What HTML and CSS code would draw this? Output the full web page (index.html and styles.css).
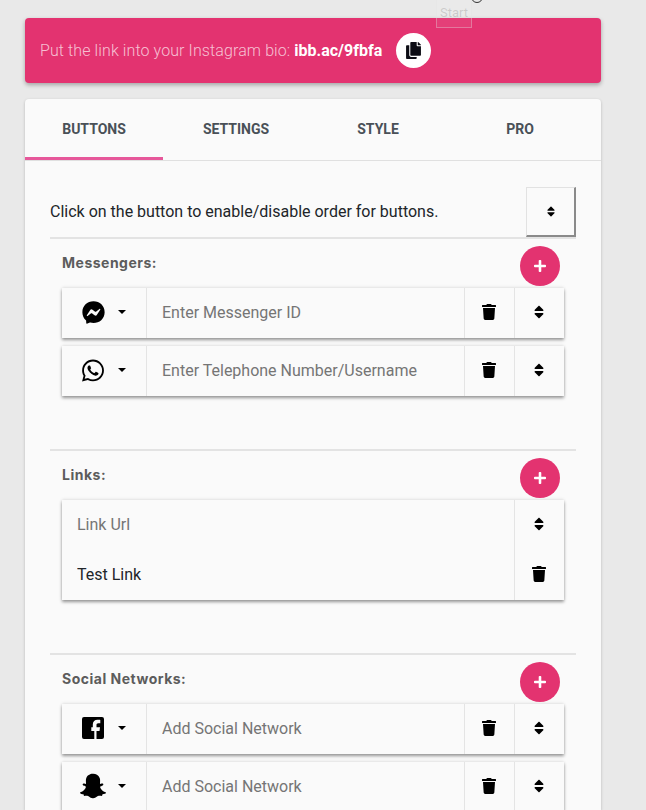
FILE: index.html
```html
<!DOCTYPE html>
<html lang="en">
<head>
  <meta charset="UTF-8" />
  <meta name="viewport" content="width=device-width, initial-scale=1.0" />
  <title>Buttons</title>
  <link rel="stylesheet" href="styles.css">
</head>
<body>

  <svg width="0" height="0" class="sprites">
    <symbol id="i-sort" viewBox="0 0 320 512"><path d="M41 288h238c21.4 0 32.1 25.9 17 41L177 448c-9.4 9.4-24.6 9.4-33.9 0L24 329c-15.1-15.1-4.4-41 17-41zm255-105L177 64c-9.4-9.4-24.6-9.4-33.9 0L24 183c-15.1 15.1-4.4 41 17 41h238c21.4 0 32.1-25.9 17-41z"/></symbol>
    <symbol id="i-trash" viewBox="0 0 448 512"><path d="M432 32H312l-9.4-18.7A24 24 0 0 0 281.1 0H166.8a23.72 23.72 0 0 0-21.4 13.3L136 32H16A16 16 0 0 0 0 48v32a16 16 0 0 0 16 16h416a16 16 0 0 0 16-16V48a16 16 0 0 0-16-16zM53.2 467a48 48 0 0 0 47.9 45h245.8a48 48 0 0 0 47.9-45L416 128H32z"/></symbol>
    <symbol id="i-plus" viewBox="0 0 448 512"><path d="M416 208H272V64c0-17.67-14.33-32-32-32h-32c-17.67 0-32 14.33-32 32v144H32c-17.67 0-32 14.33-32 32v32c0 17.67 14.33 32 32 32h144v144c0 17.67 14.33 32 32 32h32c17.67 0 32-14.33 32-32V304h144c17.67 0 32-14.33 32-32v-32c0-17.67-14.33-32-32-32z"/></symbol>
    <symbol id="i-messenger" viewBox="0 0 512 512"><path d="M256.55 8C116.52 8 8 110.34 8 248.57c0 72.3 29.71 134.78 78.07 177.94 8.35 7.51 6.63 11.86 8.05 58.23A19.92 19.92 0 0 0 122 502.31c52.91-23.3 53.59-25.14 62.56-22.7C337.85 521.8 504 423.7 504 248.57 504 110.34 396.59 8 256.55 8zm149.24 185.13l-73 115.57a37.37 37.37 0 0 1-53.91 9.93l-58.08-43.47a15 15 0 0 0-18 0l-78.37 59.44c-10.46 7.93-24.16-4.6-17.11-15.67l73-115.57a37.36 37.36 0 0 1 53.91-9.93l58.06 43.46a15 15 0 0 0 18 0l78.41-59.38c10.44-7.98 24.14 4.54 17.09 15.62z"/></symbol>
    <symbol id="i-whatsapp" viewBox="0 0 448 512"><path d="M380.9 97.1C339 55.1 283.2 32 223.9 32c-122.4 0-222 99.6-222 222 0 39.1 10.2 77.3 29.6 111L0 480l117.7-30.9c32.4 17.7 68.9 27 106.1 27h.1c122.3 0 224.1-99.6 224.1-222 0-59.3-25.2-115-67.1-157zm-157 341.6c-33.2 0-65.7-8.9-94-25.7l-6.7-4-69.8 18.3L72 359.2l-4.4-7c-18.5-29.4-28.2-63.3-28.2-98.2 0-101.7 82.8-184.5 184.6-184.5 49.3 0 95.6 19.2 130.4 54.1 34.8 34.9 56.2 81.2 56.1 130.5 0 101.8-84.9 184.6-186.6 184.6zm101.2-138.2c-5.5-2.8-32.8-16.2-37.9-18-5.1-1.9-8.8-2.8-12.5 2.8-3.7 5.6-14.3 18-17.6 21.8-3.2 3.7-6.5 4.2-12 1.4-32.6-16.3-54-29.1-75.5-66-5.7-9.8 5.7-9.1 16.3-30.3 1.8-3.7.9-6.9-.5-9.7-1.4-2.8-12.5-30.1-17.1-41.2-4.5-10.8-9.1-9.3-12.5-9.5-3.2-.2-6.9-.2-10.6-.2-3.7 0-9.7 1.4-14.8 6.9-5.1 5.6-19.4 19-19.4 46.3 0 27.3 19.9 53.7 22.6 57.4 2.8 3.7 39.1 59.7 94.8 83.8 35.2 15.2 49 16.5 66.6 13.9 10.7-1.6 32.8-13.4 37.4-26.4 4.6-13 4.6-24.1 3.2-26.4-1.3-2.5-5-3.9-10.5-6.6z"/></symbol>
    <symbol id="i-facebook" viewBox="0 0 22 22"><path d="M2 0h18a2 2 0 0 1 2 2v18a2 2 0 0 1-2 2h-5.5v-8h3l.5-3.7h-3.5V8c0-1.1.4-1.8 1.9-1.8h1.9V2.9c-.4 0-1.5-.1-2.8-.1-2.8 0-4.7 1.7-4.7 4.8v2.7H9.3V14h3v8H2a2 2 0 0 1-2-2V2a2 2 0 0 1 2-2z"/></symbol>
    <symbol id="i-snapchat" viewBox="0 0 512 512"><path d="M510.846 392.673c-5.211 12.157-27.239 21.089-67.36 27.318-2.064 2.786-3.775 14.686-6.507 23.956-1.625 5.566-5.623 8.869-12.128 8.869l-.297-.005c-9.395 0-19.203-4.323-38.852-4.323-26.521 0-35.662 6.043-56.254 20.588-21.832 15.438-42.771 28.764-74.027 27.399-31.646 2.334-58.025-16.908-72.871-27.404-20.714-14.643-29.828-20.582-56.241-20.582-18.864 0-30.736 4.72-38.852 4.72-8.073 0-11.213-4.922-12.422-9.04-2.703-9.189-4.404-21.263-6.523-24.13-20.679-3.209-67.31-11.344-68.498-32.15a10.627 10.627 0 0 1 8.877-11.069c69.583-11.455 100.924-82.901 102.227-85.934.074-.176.155-.344.237-.515 3.713-7.537 4.544-13.849 2.463-18.753-5.05-11.896-26.872-16.164-36.053-19.796-23.715-9.366-27.015-20.128-25.612-27.504 2.437-12.836 21.725-20.735 33.002-15.453 8.919 4.181 16.843 6.297 23.547 6.297 5.022 0 8.212-1.204 9.96-2.171-2.043-35.936-7.101-87.29 5.687-115.969C158.122 21.304 229.705 15.42 250.826 15.42c.944 0 9.141-.089 10.11-.089 52.148 0 102.254 26.78 126.723 81.643 12.777 28.65 7.749 79.792 5.695 116.009 1.582.872 4.357 1.942 8.599 2.139 6.397-.286 13.815-2.389 22.069-6.257 6.085-2.846 14.406-2.461 20.48.058l.029.01c9.476 3.385 15.439 10.215 15.589 17.87.184 9.747-8.522 18.165-25.878 25.018-2.118.835-4.694 1.655-7.434 2.525-9.797 3.106-24.6 7.805-28.616 17.271-2.079 4.904-1.256 11.211 2.46 18.748.087.168.166.342.239.515 1.301 3.03 32.615 74.46 102.23 85.934 6.427 1.058 11.163 7.877 7.725 15.859z"/></symbol>
  </svg>

  <div class="ghost-start">Start</div>
  <div class="ghost-cursor"></div>

  <div class="banner">
    <p class="banner-text">Put the link into your Instagram bio: <b>ibb.ac/9fbfa</b></p>
    <button class="copy-btn">
      <svg viewBox="0 0 448 512" class="copy-icon"><path d="M320 448v40c0 13.255-10.745 24-24 24H24c-13.255 0-24-10.745-24-24V120c0-13.255 10.745-24 24-24h72v296c0 30.879 25.121 56 56 56h168zm0-344V0H152c-13.255 0-24 10.745-24 24v368c0 13.255 10.745 24 24 24h272c13.255 0 24-10.745 24-24V128H344c-13.2 0-24-10.8-24-24zm120.971-31.029L375.029 7.029A24 24 0 0 0 358.059 0H352v96h96v-6.059a24 24 0 0 0-7.029-16.97z"/></svg>
    </button>
  </div>

  <div class="card">
    <div class="tabs">
      <div class="tab active">BUTTONS</div>
      <div class="tab">SETTINGS</div>
      <div class="tab">STYLE</div>
      <div class="tab">PRO</div>
    </div>

    <div class="content">
      <div class="order-row">
        <span class="order-text">Click on the button to enable/disable order for buttons.</span>
        <button class="order-btn"><svg class="ic-sort-sm"><use href="#i-sort"/></svg></button>
      </div>

      <section class="group messengers">
        <div class="group-head">
          <h3>Messengers:</h3>
          <button class="add-btn"><svg class="ic-plus"><use href="#i-plus"/></svg></button>
        </div>
        <div class="row">
          <div class="cell-select"><svg class="ic-net"><use href="#i-messenger"/></svg><i class="caret"></i></div>
          <input class="field" placeholder="Enter Messenger ID">
          <div class="cell-btn"><svg class="ic-trash"><use href="#i-trash"/></svg></div>
          <div class="cell-btn"><svg class="ic-sort"><use href="#i-sort"/></svg></div>
        </div>
        <div class="row">
          <div class="cell-select"><svg class="ic-net ic-tall"><use href="#i-whatsapp"/></svg><i class="caret"></i></div>
          <input class="field" placeholder="Enter Telephone Number/Username">
          <div class="cell-btn"><svg class="ic-trash"><use href="#i-trash"/></svg></div>
          <div class="cell-btn"><svg class="ic-sort"><use href="#i-sort"/></svg></div>
        </div>
      </section>

      <section class="group links">
        <div class="group-head">
          <h3>Links:</h3>
          <button class="add-btn"><svg class="ic-plus"><use href="#i-plus"/></svg></button>
        </div>
        <div class="row row-link">
          <div class="link-fields">
            <input class="field" placeholder="Link Url">
            <input class="field" value="Test Link">
          </div>
          <div class="link-actions">
            <div class="cell-btn"><svg class="ic-sort"><use href="#i-sort"/></svg></div>
            <div class="cell-btn"><svg class="ic-trash"><use href="#i-trash"/></svg></div>
          </div>
        </div>
      </section>

      <section class="group">
        <div class="group-head">
          <h3>Social Networks:</h3>
          <button class="add-btn"><svg class="ic-plus"><use href="#i-plus"/></svg></button>
        </div>
        <div class="row">
          <div class="cell-select"><svg class="ic-net ic-fb"><use href="#i-facebook"/></svg><i class="caret"></i></div>
          <input class="field" placeholder="Add Social Network">
          <div class="cell-btn"><svg class="ic-trash"><use href="#i-trash"/></svg></div>
          <div class="cell-btn"><svg class="ic-sort"><use href="#i-sort"/></svg></div>
        </div>
        <div class="row">
          <div class="cell-select"><svg class="ic-net ic-wide"><use href="#i-snapchat"/></svg><i class="caret"></i></div>
          <input class="field" placeholder="Add Social Network">
          <div class="cell-btn"><svg class="ic-trash"><use href="#i-trash"/></svg></div>
          <div class="cell-btn"><svg class="ic-sort"><use href="#i-sort"/></svg></div>
        </div>
      </section>
    </div>
  </div>

</body>
</html>
```

FILE: styles.css
```css
html, body {
  height: 810px;
  overflow: hidden;
}

body {
  font-family: Roboto, Arial, sans-serif;
  margin: 0;
  padding: 18px 45px 0 25px;
  box-sizing: border-box;
  background-color: #e9e9e9;
  position: relative;
}

.sprites {
  position: absolute;
}

svg {
  fill: #000;
  display: block;
}

button {
  border: none;
  padding: 0;
  cursor: pointer;
}

.ghost-start {
  position: absolute;
  top: 0;
  left: 436px;
  width: 36px;
  height: 28px;
  box-sizing: border-box;
  padding-top: 5px;
  border: 1px solid rgba(225, 225, 225, 0.35);
  border-top: none;
  background-color: rgba(255, 255, 255, 0.06);
  color: rgba(120, 120, 120, 0.28);
  font-size: 13px;
  text-align: center;
  z-index: 5;
}

.ghost-cursor {
  position: absolute;
  top: -9px;
  left: 471px;
  width: 10px;
  height: 10px;
  border: 1px solid #333;
  border-radius: 50%;
}

.banner {
  height: 65px;
  display: flex;
  align-items: center;
  padding: 0 15px;
  background-color: #e33370;
  border-radius: 4px;
  box-shadow: 0 2px 4px rgba(0, 0, 0, 0.3);
}

.banner-text {
  margin: 0;
  font-size: 16px;
  font-weight: 300;
  letter-spacing: 0.1px;
  color: rgba(255, 255, 255, 0.7);
}

.banner-text b {
  font-weight: 700;
  letter-spacing: 0;
  color: white;
}

.copy-btn {
  width: 35px;
  height: 35px;
  margin-left: 14px;
  border-radius: 50%;
  background-color: white;
  display: flex;
  align-items: center;
  justify-content: center;
}

.copy-icon {
  width: 15px;
  height: 17px;
  fill: #0c0c14;
}

.card {
  margin-top: 16px;
  height: 711px;
  overflow: hidden;
  background-color: #fafafa;
  border-radius: 4px 4px 0 0;
  box-shadow: 0 1px 3px rgba(0, 0, 0, 0.22);
}

.tabs {
  display: flex;
  gap: 4px;
  height: 61px;
  border-bottom: 1px solid #e0e0e0;
}

.tab {
  width: 138px;
  height: 61px;
  box-sizing: border-box;
  padding-top: 22px;
  text-align: center;
  font-size: 14px;
  font-weight: 700;
  line-height: 17px;
  color: #495057;
}

.tab.active {
  border-bottom: 3px solid #e6579a;
}

.content {
  padding: 26px 25px 0;
}

.order-row {
  display: flex;
  justify-content: space-between;
  align-items: center;
  font-size: 16px;
  color: #212529;
}

.order-text {
  padding-bottom: 2px;
}

.order-btn {
  width: 50px;
  height: 50px;
  display: flex;
  align-items: center;
  justify-content: center;
  background-color: #fafafa;
  border-top: 1px solid #e2e2e2;
  border-left: 1px solid #e2e2e2;
  border-right: 2px solid #8a8a8a;
  border-bottom: 2px solid #8a8a8a;
}

.ic-sort-sm {
  width: 8px;
  height: 13px;
}

.group {
  border-top: 2px solid #e3e3e3;
  padding: 7px 12px 0;
}

.messengers {
  height: 212px;
  box-sizing: border-box;
}

.links {
  height: 204px;
  box-sizing: border-box;
}

.group-head {
  display: flex;
  justify-content: space-between;
  height: 40px;
  margin-bottom: 2px;
  padding-right: 4px;
}

.group-head h3 {
  margin: 8px 0 0;
  font-family: Inter, Arial, sans-serif;
  font-size: 14px;
  font-weight: 700;
  letter-spacing: 0.5px;
  line-height: 17px;
  color: #5c5c5c;
}

.add-btn {
  width: 40px;
  height: 40px;
  border-radius: 50%;
  background-color: #e33370;
  display: flex;
  align-items: center;
  justify-content: center;
  position: relative;
  z-index: 2;
}

.ic-plus {
  width: 12px;
  height: 14px;
  fill: white;
}

.row {
  display: flex;
  height: 50px;
  margin-bottom: 8px;
  background-color: #fafafa;
  box-shadow: 0 2px 3px rgba(0, 0, 0, 0.4), 0 -1px 3px rgba(0, 0, 0, 0.08);
}

.cell-select {
  width: 85px;
  flex: none;
  display: flex;
  align-items: center;
  padding: 0 0 2px 20px;
  box-sizing: border-box;
  border-right: 1px solid #e4e4e4;
}

.ic-net {
  width: 23px;
  height: 23px;
}

/* fa glyphs on a 448 box: taller box so the glyph comes out 22 wide */
.ic-tall {
  width: 22px;
  height: 25px;
  margin-right: 1px;
}

.ic-fb {
  width: 22px;
  height: 22px;
  margin-right: 1px;
}

.ic-wide {
  width: 26px;
  height: 26px;
  margin: 0 -1px 0 -2px;
}

.caret {
  width: 0;
  height: 0;
  margin-left: 13px;
  margin-top: -1px;
  border-top: 4px solid #000;
  border-left: 4px solid transparent;
  border-right: 4px solid transparent;
}

.field {
  flex: 1;
  min-width: 0;
  box-sizing: border-box;
  border: none;
  outline: none;
  background: transparent;
  padding: 0 15px 2px;
  font-family: Roboto, Arial, sans-serif;
  font-size: 16px;
  color: #212529;
}

.field::placeholder {
  color: #757575;
  opacity: 1;
}

.cell-btn {
  width: 50px;
  height: 50px;
  flex: none;
  box-sizing: border-box;
  padding: 0 2px 2px 0;
  display: flex;
  align-items: center;
  justify-content: center;
  border-left: 1px solid #e4e4e4;
}

.ic-trash {
  width: 14px;
  height: 16px;
}

.ic-sort {
  width: 10px;
  height: 16px;
}

.row-link {
  height: 100px;
}

.link-fields {
  flex: 1;
  display: flex;
  flex-direction: column;
}

.link-fields .field {
  flex: none;
  height: 50px;
}
```
